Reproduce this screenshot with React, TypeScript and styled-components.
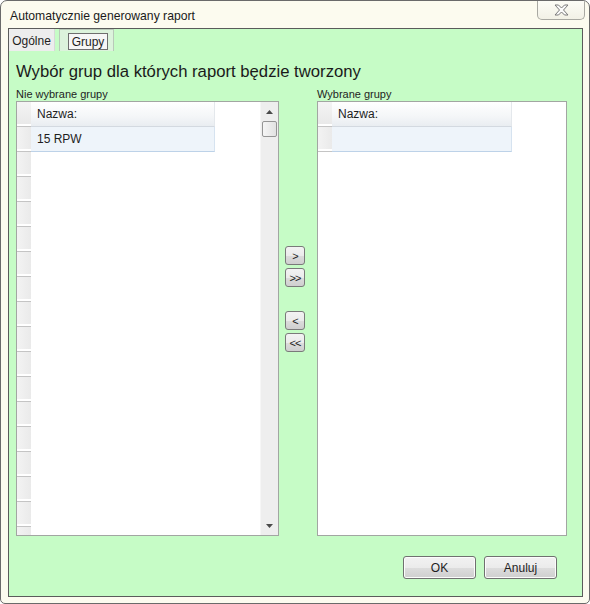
import styled, { createGlobalStyle } from 'styled-components'

const GlobalStyle = createGlobalStyle`
    html, body {
        margin: 0;
        padding: 0;
        background: #ffffff;
    }
    body {
        font-family: "Liberation Sans", Arial, sans-serif;
        font-size: 12px;
        color: #1e1e1e;
    }
`

const Window = styled.div`
    box-sizing: border-box;
    width: 590px;
    height: 604px;
    display: flex;
    flex-direction: column;
    background: #fcfbef;
    border: 1px solid #6a6a6a;
    border-radius: 7px 7px 5px 5px;
    overflow: hidden;
`

const TitleBar = styled.div`
    height: 27px;
    display: flex;
    align-items: flex-start;
    padding: 0 4px 0 9px;
`

const Title = styled.span`
    margin-top: 8px;
    line-height: 14px;
    font-size: 12.2px;
    color: #1a1a1a;
`

const CloseButton = styled.div`
    box-sizing: border-box;
    margin-left: auto;
    margin-top: -1px;
    width: 48px;
    height: 20px;
    border: 1px solid #a9a9a2;
    border-top: none;
    border-radius: 0 0 5px 5px;
    background: linear-gradient(#fdfdf7, #f2f1e6);
    display: flex;
    align-items: center;
    justify-content: center;
`

const Client = styled.div`
    flex: 1;
    margin: 0 6px 6px 7px;
    border: 1px solid #5b5b5b;
    background: #c6fcc6;
    display: flex;
    flex-direction: column;
`

const TabStrip = styled.div`
    height: 22px;
    display: flex;
    align-items: stretch;
`

const Tab = styled.div<{ $active?: boolean }>`
    box-sizing: border-box;
    display: flex;
    align-items: center;
    justify-content: center;
    font-size: 12px;
    ${p => p.$active ? `
        width: 55px;
        margin-left: 4px;
        padding: 3px 5px 1px 8px;
        border: 1px solid #b9c9b9;
        border-bottom: none;
        background: #dcf3dc;
    ` : `
        width: 46px;
        padding-top: 1px;
        background: #ededed;
        border-right: 1px solid #d8d8d8;
    `}
`

const FocusBox = styled.span`
    flex: 1;
    align-self: stretch;
    display: flex;
    align-items: center;
    justify-content: center;
    border: 1px solid #6e6e6e;
    background: #f6f6f6;
`

const Page = styled.div`
    flex: 1;
    display: flex;
    flex-direction: column;
    padding: 0 15px 0 7px;
`

const Heading = styled.h1`
    margin: 11px 0 0 0;
    font-size: 16.7px;
    line-height: 20px;
    font-weight: normal;
    color: #1a1a1a;
`

const Lists = styled.div`
    display: flex;
    margin-top: 6px;
`

const ListColumn = styled.div`
    display: flex;
    flex-direction: column;
`

const ListLabel = styled.div`
    font-size: 11px;
    line-height: 13px;
    color: #1e1e1e;
`

const GridFrame = styled.div<{ $width: number }>`
    box-sizing: border-box;
    width: ${p => p.$width}px;
    height: 435px;
    border: 1px solid #a2a6a2;
    background: #ffffff;
    display: flex;
    overflow: hidden;
`

const GridBody = styled.div`
    flex: 1;
    display: flex;
    flex-direction: column;
    overflow: hidden;
`

const GridRow = styled.div`
    display: flex;
    height: 25px;
    flex-shrink: 0;
`

const RowHead = styled.div<{ $corner?: boolean }>`
    box-sizing: border-box;
    width: 14px;
    background: ${p => p.$corner ? 'linear-gradient(#f4f4f4, #e8e8e8)' : 'linear-gradient(to right, #f3f3f3, #eaeaea)'};
    border-bottom: 1px solid #c4c4c4;
    box-shadow: inset 0 -2px 0 #ffffff;
`

const HeaderCell = styled.div<{ $width: number }>`
    box-sizing: border-box;
    width: ${p => p.$width}px;
    padding: 0 6px;
    display: flex;
    align-items: center;
    background: linear-gradient(#ffffff, #f4f6f8 60%, #e9edf1);
    border-bottom: 1px solid #d3d9e0;
    border-right: 1px solid #e4e8ec;
    font-size: 12px;
`

const DataCell = styled.div<{ $width: number }>`
    box-sizing: border-box;
    width: ${p => p.$width}px;
    padding: 0 6px;
    display: flex;
    align-items: center;
    background: #eef4fa;
    border-bottom: 1px solid #bdd2e8;
    border-right: 1px solid #d6e3f0;
    font-size: 12px;
`

const ScrollBar = styled.div`
    width: 17px;
    display: flex;
    flex-direction: column;
    align-items: center;
    background: #eeeeee;
    border-left: 1px solid #f6f6f6;
`

const ScrollArrow = styled.div`
    height: 19px;
    display: flex;
    align-items: center;
    justify-content: center;
`

const ScrollThumb = styled.div`
    box-sizing: border-box;
    width: 15px;
    height: 16px;
    border: 1px solid #959595;
    border-radius: 2px;
    background: linear-gradient(to right, #f5f5f5, #e2e2e2);
`

const ScrollTrack = styled.div`
    flex: 1;
`

const MoveColumn = styled.div`
    width: 38px;
    display: flex;
    flex-direction: column;
    padding: 158px 0 0 6px;
    box-sizing: border-box;
`

const MoveGroup = styled.div`
    display: flex;
    flex-direction: column;
    gap: 3px;
    & + & {
        margin-top: 24px;
    }
`

const MoveButton = styled.button`
    box-sizing: border-box;
    width: 20px;
    height: 19px;
    padding: 0;
    border: 1px solid #7a7a7a;
    border-radius: 3px;
    background: linear-gradient(#f3f3f3, #ebebeb 50%, #dcdcdc 51%, #cfcfcf);
    font-family: "Liberation Sans", Arial, sans-serif;
    font-size: 11px;
    color: #1e1e1e;
    letter-spacing: -1px;
`

const Footer = styled.div`
    display: flex;
    justify-content: flex-end;
    gap: 8px;
    margin-top: 20px;
    padding-right: 10px;
`

const DialogButton = styled.button`
    box-sizing: border-box;
    width: 73px;
    height: 23px;
    padding: 0;
    border: 1px solid #707070;
    border-radius: 3px;
    background: linear-gradient(#f2f2f2, #ebebeb 50%, #dddddd 51%, #cfcfcf);
    box-shadow: inset 0 0 0 1px #fcfcfc;
    font-family: "Liberation Sans", Arial, sans-serif;
    font-size: 12px;
    color: #1e1e1e;
`

const CloseGlyph = () => (
    <svg width="15" height="12" viewBox="0 0 15 12">
        <polygon
            points="1,1 4.5,1 7.5,4 10.5,1 14,1 9.5,6 14,11 10.5,11 7.5,8 4.5,11 1,11 5.5,6"
            fill="#fbfbfb"
            stroke="#787878"
            strokeWidth="1"
            strokeLinejoin="round"
        />
    </svg>
)

const Arrow = ({ up }: { up?: boolean }) => (
    <svg width="7" height="4" viewBox="0 0 7 4">
        <polygon points={up ? '3.5,0 7,4 0,4' : '0,0 7,0 3.5,4'} fill="#4a4a4a" />
    </svg>
)

const EMPTY_ROWS = Array.from({ length: 16 })

const App = () => {
    return (
        <>
            <GlobalStyle />
            <Window>
                <TitleBar>
                    <Title>Automatycznie generowany raport</Title>
                    <CloseButton>
                        <CloseGlyph />
                    </CloseButton>
                </TitleBar>
                <Client>
                    <TabStrip>
                        <Tab>Ogólne</Tab>
                        <Tab $active>
                            <FocusBox>Grupy</FocusBox>
                        </Tab>
                    </TabStrip>
                    <Page>
                        <Heading>Wybór grup dla których raport będzie tworzony</Heading>
                        <Lists>
                            <ListColumn>
                                <ListLabel>Nie wybrane grupy</ListLabel>
                                <GridFrame $width={263}>
                                    <GridBody>
                                        <GridRow>
                                            <RowHead $corner />
                                            <HeaderCell $width={184}>Nazwa:</HeaderCell>
                                        </GridRow>
                                        <GridRow>
                                            <RowHead />
                                            <DataCell $width={184}>15 RPW</DataCell>
                                        </GridRow>
                                        {EMPTY_ROWS.map((_, i) => (
                                            <GridRow key={i}>
                                                <RowHead />
                                            </GridRow>
                                        ))}
                                    </GridBody>
                                    <ScrollBar>
                                        <ScrollArrow>
                                            <Arrow up />
                                        </ScrollArrow>
                                        <ScrollThumb />
                                        <ScrollTrack />
                                        <ScrollArrow>
                                            <Arrow />
                                        </ScrollArrow>
                                    </ScrollBar>
                                </GridFrame>
                            </ListColumn>
                            <MoveColumn>
                                <MoveGroup>
                                    <MoveButton>&gt;</MoveButton>
                                    <MoveButton>&gt;&gt;</MoveButton>
                                </MoveGroup>
                                <MoveGroup>
                                    <MoveButton>&lt;</MoveButton>
                                    <MoveButton>&lt;&lt;</MoveButton>
                                </MoveGroup>
                            </MoveColumn>
                            <ListColumn>
                                <ListLabel>Wybrane grupy</ListLabel>
                                <GridFrame $width={250}>
                                    <GridBody>
                                        <GridRow>
                                            <RowHead $corner />
                                            <HeaderCell $width={180}>Nazwa:</HeaderCell>
                                        </GridRow>
                                        <GridRow>
                                            <RowHead />
                                            <DataCell $width={180} />
                                        </GridRow>
                                    </GridBody>
                                </GridFrame>
                            </ListColumn>
                        </Lists>
                        <Footer>
                            <DialogButton>OK</DialogButton>
                            <DialogButton>Anuluj</DialogButton>
                        </Footer>
                    </Page>
                </Client>
            </Window>
        </>
    )
}

export default App
